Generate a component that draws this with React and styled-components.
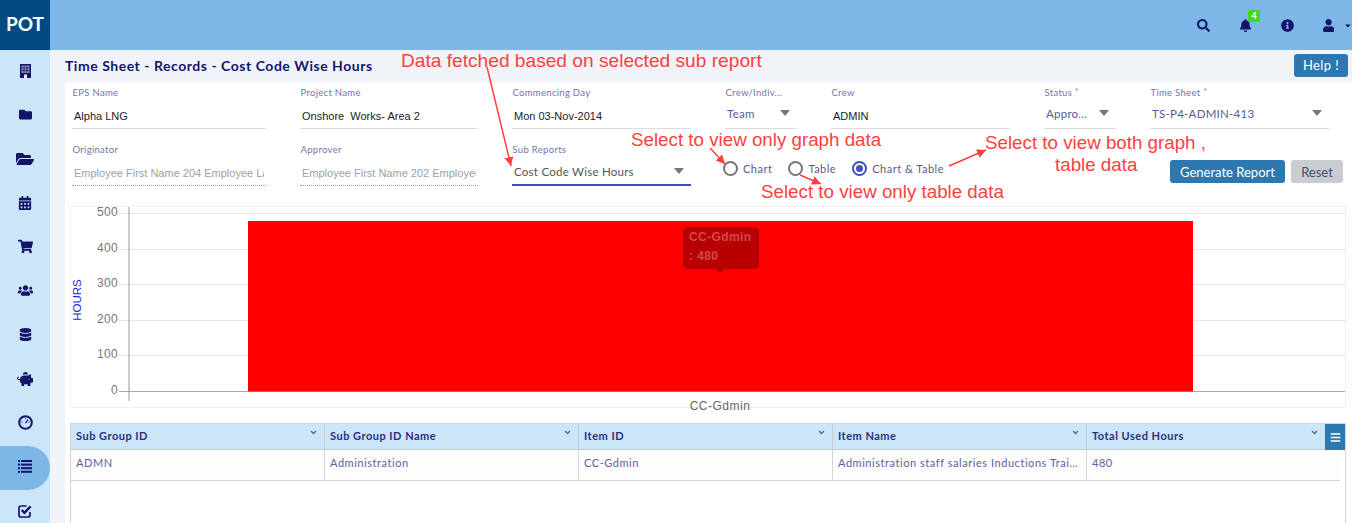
import React from "react";
import styled, { createGlobalStyle } from "styled-components";
import {
  FaFolder,
  FaFolderOpen,
  FaCalendarAlt,
  FaShoppingCart,
  FaUsers,
  FaDatabase,
  FaPiggyBank,
  FaSearch,
  FaBell,
  FaInfoCircle,
  FaUser,
  FaCaretDown,
  FaBars,
  FaAngleDown,
} from "react-icons/fa";

const GlobalStyle = createGlobalStyle`
  html, body {
    margin: 0;
    padding: 0;
    height: 523px;
    overflow: hidden;
    background: #f0f4f8;
    font-family: "Lato", "Liberation Sans", sans-serif;
  }
  * { box-sizing: border-box; }
`;

const Page = styled.div`
  position: relative;
  width: 1352px;
  height: 523px;
  overflow: hidden;
`;
const Header = styled.div`
  display: flex;
  align-items: center;
  height: 50px;
  background: #7cb7e8;
`;
const Logo = styled.div`
  width: 50px;
  height: 50px;
  display: flex;
  align-items: center;
  justify-content: center;
  padding-bottom: 3px;
  background: #004a82;
  color: #fff;
  font-size: 19px;
  font-weight: 700;
`;
const HeaderIcons = styled.div`
  margin-left: auto;
  display: flex;
  align-items: center;
`;
const HeaderIcon = styled.div`
  position: relative;
  width: 42px;
  display: flex;
  align-items: center;
  justify-content: center;
  color: #14146b;
  font-size: 13px;
`;
const UserIcon = styled(HeaderIcon)`
  width: 44px;
  justify-content: flex-start;
  gap: 10px;
  padding-left: 15px;
`;
const Badge = styled.span`
  position: absolute;
  top: -9px;
  left: 24px;
  width: 12px;
  height: 12px;
  border-radius: 2px;
  background: #3fdc1e;
  color: #fff;
  font-size: 9px;
  font-weight: 700;
  line-height: 12px;
  text-align: center;
`;
const Body = styled.div`
  display: flex;
  height: 473px;
`;
const Sidebar = styled.div`
  width: 50px;
  flex: none;
  background: #cbe5f9;
`;
const SideItem = styled.div`
  height: 44px;
  display: flex;
  align-items: center;
  justify-content: center;
  padding-bottom: 3px;
  color: #14146b;
  background: ${({ $active }) => ($active ? "#7cb7e8" : "transparent")};
  border-radius: ${({ $active }) => ($active ? "0 22px 22px 0" : "0")};
`;
const Main = styled.div`
  flex: 1;
  min-width: 0;
  padding-left: 15px;
`;
const TitleBar = styled.div`
  height: 32px;
  display: flex;
  align-items: center;
  justify-content: space-between;
  padding: 0 4px 2px 0;
`;
const Title = styled.div`
  color: #14146b;
  font-size: 14px;
  font-weight: 700;
  letter-spacing: 0.53px;
`;
const Button = styled.button`
  border: none;
  border-radius: 3px;
  font-family: inherit;
  font-size: 13px;
  letter-spacing: 0.4px;
  height: 23px;
  padding: 0;
  width: ${({ $width }) => $width}px;
  color: ${({ $plain }) => ($plain ? "#4a4a6a" : "#fff")};
  background: ${({ $plain }) => ($plain ? "#c9cdd1" : "#2e78b2")};
`;
const ActionButton = styled(Button)`
  letter-spacing: 0;
`;
const Card = styled.div`
  height: 441px;
  background: #fff;
  border-radius: 4px 0 0 0;
  padding: 0 6px 0 5px;
`;
const FormRow = styled.div`
  display: flex;
  gap: 34px;
  height: ${({ $height }) => $height}px;
  padding-left: 2px;
`;
const Field = styled.div`
  width: ${({ $width }) => $width}px;
  flex: none;
  display: flex;
  flex-direction: column;
`;
const Label = styled.div`
  height: 20px;
  padding: 5px 0 0 0.5px;
  color: #7474aa;
  font-size: 9.5px;
  letter-spacing: 0.3px;
  white-space: nowrap;
  sup {
    font-size: 9px;
    line-height: 0;
    vertical-align: 1px;
    color: #888;
  }
`;
const Input = styled.div`
  height: 27px;
  padding: 8px 0 0 2px;
  font-family: "Liberation Sans", sans-serif;
  font-size: 11px;
  color: #1a1a2e;
  white-space: pre;
  border-bottom: 1px solid #ddd;
`;
const MutedInput = styled(Input)`
  color: #a0a0a0;
  border-bottom: 1px dotted #999;
  padding-right: 2px;
`;
const Clipped = styled.div`
  overflow: hidden;
`;
const Select = styled.div`
  height: 27px;
  display: flex;
  align-items: flex-start;
  justify-content: space-between;
  padding: 5px 7px 0 2px;
  color: #5a5a9a;
  font-size: 11.5px;
  letter-spacing: 0.25px;
  white-space: nowrap;
  border-bottom: 1px solid #ddd;
`;
const BigSelect = styled(Select)`
  align-items: center;
  padding: 0 7px 0 2px;
  color: #555;
  border-bottom: 2px solid #3f51b5;
`;
const Caret = styled.span`
  width: 0;
  height: 0;
  margin-top: 3px;
  border-left: 5px solid transparent;
  border-right: 5px solid transparent;
  border-top: 6px solid #777;
`;
const BigCaret = styled(Caret)`
  margin-top: -2px;
`;
const Radios = styled.div`
  display: flex;
  align-items: center;
  height: 20px;
  margin: 19px 0 0 -2px;
`;
const RadioItem = styled.div`
  display: flex;
  align-items: center;
  gap: 5px;
  margin-right: 16px;
  color: #5a5a8a;
  font-size: 11px;
  letter-spacing: 0.5px;
`;
const RadioDot = styled.span`
  width: 15px;
  height: 15px;
  border-radius: 50%;
  border: 2px solid ${({ $on }) => ($on ? "#3f51b5" : "#757575")};
  display: flex;
  align-items: center;
  justify-content: center;
  &::after {
    content: "";
    width: 7px;
    height: 7px;
    border-radius: 50%;
    background: ${({ $on }) => ($on ? "#3f51b5" : "transparent")};
  }
`;
const Actions = styled.div`
  display: flex;
  gap: 6px;
  margin: 21px 0 0 auto;
  padding-right: 3px;
`;
const ChartBox = styled.div`
  position: relative;
  height: 202px;
  margin-top: 10px;
  border: 1px solid #f0f0f0;
`;
const ChartSvg = styled.svg`
  display: block;
  overflow: visible;
`;
const Tooltip = styled.div`
  position: absolute;
  left: 612px;
  top: 20px;
  width: 76px;
  height: 42px;
  padding: 1px 6px;
  border-radius: 5px;
  background: #b90000;
  color: #cf4a4a;
  font-family: "Liberation Sans", sans-serif;
  font-size: 12px;
  font-weight: 700;
  letter-spacing: 0.4px;
  line-height: 19px;
  white-space: nowrap;
  &::after {
    content: "";
    position: absolute;
    left: 32px;
    bottom: -4px;
    border-left: 5px solid transparent;
    border-right: 5px solid transparent;
    border-top: 4px solid #b90000;
  }
`;
const Table = styled.div`
  position: relative;
  margin-top: 15px;
  height: 120px;
  border: 1px solid #d4d4d4;
  border-bottom: none;
`;
const HeadRow = styled.div`
  display: flex;
  height: 26px;
  background: #cbe5f9;
  border-bottom: 1px solid #ccc;
`;
const HeadCell = styled.div`
  width: ${({ $width }) => $width}px;
  flex: none;
  display: flex;
  align-items: center;
  justify-content: space-between;
  padding: 0 6px 2px 5px;
  color: #2f2f80;
  font-size: 11px;
  font-weight: 700;
  letter-spacing: 0.5px;
  border-right: ${({ $last }) => ($last ? "none" : "1px solid #ccc")};
  svg {
    color: #667;
    font-size: 9px;
    margin-bottom: 6px;
  }
`;
const DataRow = styled.div`
  display: flex;
  width: 1269px;
  height: 31px;
  background: #fdfdfd;
  border-bottom: 1px solid #d4d4d4;
`;
const DataCell = styled.div`
  width: ${({ $width }) => $width}px;
  flex: none;
  padding: 6px 5px 0;
  color: #5f5f9f;
  font-size: 11px;
  letter-spacing: 0.55px;
  white-space: nowrap;
  overflow: hidden;
  text-overflow: ellipsis;
  border-right: ${({ $last }) => ($last ? "none" : "1px solid #d4d4d4")};
`;
const MenuButton = styled.div`
  position: absolute;
  top: 0;
  right: 0;
  width: 20px;
  height: 26px;
  display: flex;
  align-items: center;
  justify-content: center;
  background: #2e78b2;
  color: #fff;
  font-size: 11px;
`;
const Note = styled.div`
  position: absolute;
  left: ${({ $left }) => $left}px;
  top: ${({ $top }) => $top}px;
  color: #ff4040;
  font-family: "Liberation Sans", sans-serif;
  font-size: ${({ $size }) => $size || 18.75}px;
  line-height: 22px;
  white-space: nowrap;
`;
const Arrows = styled.svg`
  position: absolute;
  left: 0;
  top: 0;
  pointer-events: none;
`;

const BuildingIcon = () => (
  <svg width="11" height="14" viewBox="0 0 11 14">
    <rect width="11" height="14" fill="currentColor" />
    <rect x="1.5" y="1.5" width="8" height="7.5" fill="#8d8fb8" />
    <path d="M1.5 4h8M1.5 6.5h8M4 1.5v7.5M6.8 1.5v7.5" stroke="#14146b" strokeWidth="0.7" />
    <rect x="4" y="10.5" width="3" height="3.5" fill="#e8eef8" />
  </svg>
);
const GaugeIcon = () => (
  <svg width="15" height="15" viewBox="0 0 15 15">
    <circle cx="7.5" cy="7.5" r="6.3" fill="none" stroke="currentColor" strokeWidth="2" />
    <path d="M7.5 8.2L9.8 4.6" stroke="currentColor" strokeWidth="1.2" />
    <path d="M3.6 7h1.2M10.4 7h1.2M7.5 3.3v1" stroke="currentColor" strokeWidth="0.9" />
  </svg>
);
const ListIcon = () => (
  <svg width="14" height="13" viewBox="0 0 14 13" fill="currentColor">
    <rect y="0" width="2" height="2" />
    <rect y="3.6" width="2" height="2" />
    <rect y="7.2" width="2" height="2" />
    <rect y="10.8" width="2" height="2" />
    <rect x="3" y="0" width="11" height="2" />
    <rect x="3" y="3.6" width="11" height="2" />
    <rect x="3" y="7.2" width="11" height="2" />
    <rect x="3" y="10.8" width="11" height="2" />
  </svg>
);
const CheckIcon = () => (
  <svg width="14" height="14" viewBox="0 0 14 14" fill="none" stroke="currentColor">
    <path d="M8.5 2H3Q1 2 1 4V11Q1 13 3 13H10Q12 13 12 11V8" strokeWidth="1.7" />
    <path d="M3.8 6.2L6.4 8.8L12.6 2.4" strokeWidth="2.4" />
  </svg>
);

const sideIcons = [
  <BuildingIcon />,
  <FaFolder size={13} />,
  <FaFolderOpen size={18} />,
  <FaCalendarAlt size={14} />,
  <FaShoppingCart size={15} />,
  <FaUsers size={15} />,
  <FaDatabase size={13} />,
  <FaPiggyBank size={16} />,
  <GaugeIcon />,
  <ListIcon />,
  <CheckIcon />,
];
const columns = [
  { name: "Sub Group ID", value: "ADMN", width: 254 },
  { name: "Sub Group ID Name", value: "Administration", width: 254 },
  { name: "Item ID", value: "CC-Gdmin", width: 254 },
  {
    name: "Item Name",
    value: "Administration staff salaries Inductions Training and others",
    width: 254,
  },
  { name: "Total Used Hours", value: "480", width: 238 },
];
const yTicks = [
  { label: "500", y: 6 },
  { label: "400", y: 42 },
  { label: "300", y: 77 },
  { label: "200", y: 113 },
  { label: "100", y: 148 },
  { label: "0", y: 184 },
];

const Chart = () => (
  <ChartSvg width="1274" height="200">
    {yTicks.map((t) => (
      <g key={t.label}>
        <line x1="48" x2="1274" y1={t.y + 0.5} y2={t.y + 0.5} stroke={t.y === 184 ? "#aaa" : "#e6e6e6"} />
        <text x="47" y={t.y + 3} textAnchor="end" fontSize="12" letterSpacing="0.3" fill="#777" fontFamily="Liberation Sans">
          {t.label}
        </text>
      </g>
    ))}
    <line x1="58" x2="58" y1="0" y2="194" stroke="#999" />
    <rect x="177" y="14" width="945" height="170.5" fill="#ff0000" />
    <text x="6" y="93" transform="rotate(-90 6 93)" dy="4" textAnchor="middle" fontSize="11.5" fill="#2222ee" fontFamily="Liberation Sans">
      HOURS
    </text>
    <text x="649" y="203" textAnchor="middle" fontSize="12" letterSpacing="0.5" fill="#666" fontFamily="Liberation Sans">
      CC-Gdmin
    </text>
  </ChartSvg>
);

const arrowLines = [
  [487, 67, 511, 166],
  [710, 148, 725, 164],
  [800, 175, 821, 184],
  [949, 166, 986, 150],
];

const App = () => (
  <Page>
    <GlobalStyle />
    <Header>
      <Logo>POT</Logo>
      <HeaderIcons>
        <HeaderIcon><FaSearch /></HeaderIcon>
        <HeaderIcon><FaBell /><Badge>4</Badge></HeaderIcon>
        <HeaderIcon><FaInfoCircle /></HeaderIcon>
        <UserIcon><FaUser /><FaCaretDown size={9} /></UserIcon>
      </HeaderIcons>
    </Header>
    <Body>
      <Sidebar>
        {sideIcons.map((icon, i) => (
          <SideItem key={i} $active={i === 9}>{icon}</SideItem>
        ))}
      </Sidebar>
      <Main>
        <TitleBar>
          <Title>Time Sheet - Records - Cost Code Wise Hours</Title>
          <Button $width={54}>Help !</Button>
        </TitleBar>
        <Card>
          <FormRow $height={57}>
            <Field $width={194}><Label>EPS Name</Label><Input>Alpha LNG</Input></Field>
            <Field $width={178}><Label>Project Name</Label><Input>Onshore  Works- Area 2</Input></Field>
            <Field $width={179}><Label>Commencing Day</Label><Input>Mon 03-Nov-2014</Input></Field>
            <Field $width={72}><Label>Crew/Indiv...</Label><Select>Team<Caret /></Select></Field>
            <Field $width={179}><Label>Crew</Label><Input>ADMIN</Input></Field>
            <Field $width={72}><Label>Status <sup>*</sup></Label><Select>Appro...<Caret /></Select></Field>
            <Field $width={179}><Label>Time Sheet <sup>*</sup></Label><Select>TS-P4-ADMIN-413<Caret /></Select></Field>
          </FormRow>
          <FormRow $height={57}>
            <Field $width={194}><Label>Originator</Label><MutedInput><Clipped>Employee First Name 204 Employee Last Name</Clipped></MutedInput></Field>
            <Field $width={178}><Label>Approver</Label><MutedInput><Clipped>Employee First Name 202 Employee Last Name</Clipped></MutedInput></Field>
            <Field $width={179}><Label>Sub Reports</Label><BigSelect>Cost Code Wise Hours<BigCaret /></BigSelect></Field>
            <Radios>
              <RadioItem><RadioDot />Chart</RadioItem>
              <RadioItem><RadioDot />Table</RadioItem>
              <RadioItem><RadioDot $on />Chart &amp; Table</RadioItem>
            </Radios>
            <Actions>
              <ActionButton $width={115}>Generate Report</ActionButton>
              <ActionButton $width={52} $plain>Reset</ActionButton>
            </Actions>
          </FormRow>
          <ChartBox>
            <Chart />
            <Tooltip>CC-Gdmin<br />: 480</Tooltip>
          </ChartBox>
          <Table>
            <HeadRow>
              {columns.map((c, i) => (
                <HeadCell key={c.name} $width={c.width} $last={i === 4}>{c.name}<FaAngleDown /></HeadCell>
              ))}
            </HeadRow>
            <DataRow>
              {columns.map((c, i) => (
                <DataCell key={c.name} $width={i === 4 ? 245 : c.width} $last={i === 4}>{c.value}</DataCell>
              ))}
            </DataRow>
            <MenuButton><FaBars /></MenuButton>
          </Table>
        </Card>
      </Main>
    </Body>
    <Note $left={401} $top={50} $size={19.15}>Data fetched based on selected sub report</Note>
    <Note $left={631} $top={129}>Select to view only graph data</Note>
    <Note $left={761} $top={181}>Select to view only table data</Note>
    <Note $left={985} $top={132}>Select to view both graph ,</Note>
    <Note $left={1055} $top={154}>table data</Note>
    <Arrows width="1352" height="523">
      <defs>
        <marker id="head" markerWidth="7" markerHeight="7" refX="6" refY="3" orient="auto">
          <path d="M0 0L6 3L0 6Z" fill="#ff4040" />
        </marker>
      </defs>
      {arrowLines.map(([x1, y1, x2, y2]) => (
        <line key={x1} x1={x1} y1={y1} x2={x2} y2={y2} stroke="#ff4040" strokeWidth="1.5" markerEnd="url(#head)" />
      ))}
    </Arrows>
  </Page>
);

export default App;
